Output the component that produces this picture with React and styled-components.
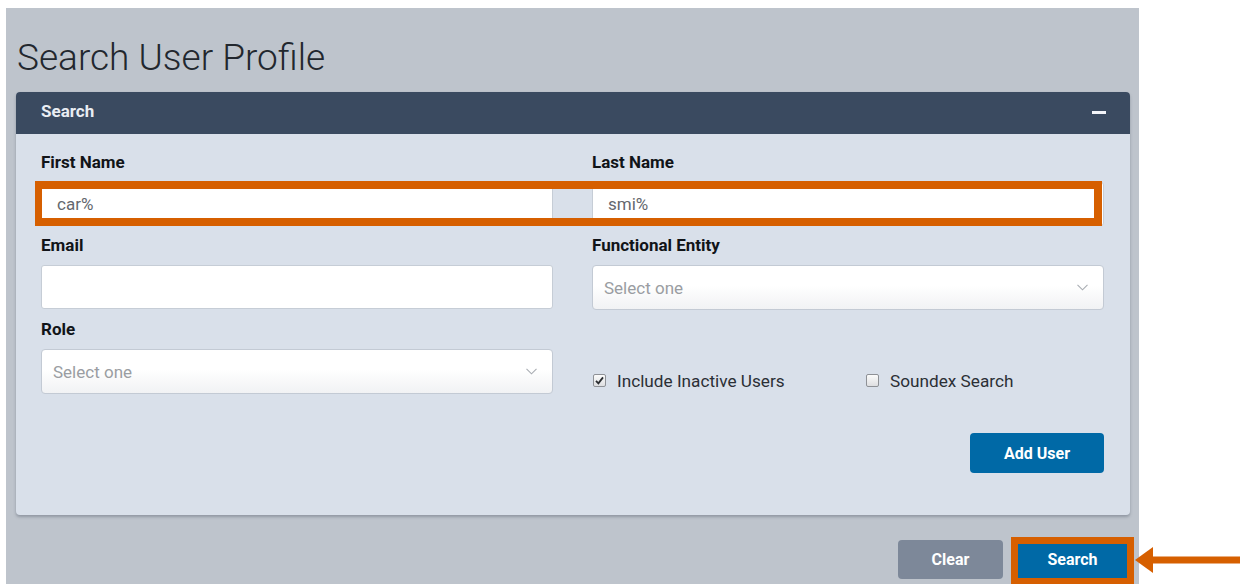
import React from "react";
import styled, { createGlobalStyle } from "styled-components";

const GlobalStyle = createGlobalStyle`
  html, body {
    margin: 0;
    padding: 0;
    background: #ffffff;
  }
  body {
    font-family: Roboto, "Liberation Sans", Arial, sans-serif;
    overflow: hidden;
  }
  * { box-sizing: border-box; }
`;

const ORANGE = "#d65f00";

const Page = styled.div`
  margin: 8px 0 0 6px;
  width: 1133px;
  min-height: calc(100vh - 8px);
  background: #bec4cc;
  padding: 0 9px 0 10px;
  display: flex;
  flex-direction: column;
`;

const Title = styled.h1`
  margin: 27px 0 11px 1px;
  font-size: 37px;
  line-height: 46px;
  font-weight: 300;
  color: #22272e;
`;

const Panel = styled.section`
  background: #d9e0ea;
  border-radius: 4px;
  box-shadow: 0 2px 3px rgba(60, 70, 85, 0.35);
`;

const PanelHeader = styled.header`
  height: 42px;
  background: #3a4a60;
  border-radius: 4px 4px 0 0;
  display: flex;
  align-items: center;
  justify-content: space-between;
  padding: 0 24px 4px 25px;
  color: #e9edf3;
  font-size: 17px;
  font-weight: 700;
`;

const CollapseBar = styled.span`
  width: 14px;
  height: 3px;
  margin-top: 3px;
  background: #f2f4f8;
`;

const PanelBody = styled.div`
  position: relative;
  padding: 18px 26px 42px 25px;
`;

const FieldGrid = styled.div`
  display: grid;
  grid-template-columns: 1fr 1fr;
  column-gap: 39px;
  row-gap: 9px;
`;

const Field = styled.div`
  display: flex;
  flex-direction: column;
`;

const Label = styled.label`
  font-size: 17px;
  line-height: 20px;
  font-weight: 700;
  color: #111418;
  margin-bottom: 10px;
`;

const TextInput = styled.div`
  height: 44px;
  background: #ffffff;
  border: 1px solid #c6cdd6;
  border-radius: 3px;
  display: flex;
  align-items: center;
  padding: 0 15px;
  font-size: 17px;
  color: #64686e;
`;

const Select = styled.div`
  height: 45px;
  background: linear-gradient(#ffffff 45%, #f1f2f4);
  border: 1px solid #c3cad4;
  border-radius: 4px;
  display: flex;
  align-items: center;
  justify-content: space-between;
  padding: 0 15px 0 11px;
  font-size: 17px;
  color: #9a9da2;
`;

const Chevron = () => (
  <svg width="11" height="7" viewBox="0 0 11 7" fill="none">
    <path d="M0.5 0.8 L5.5 5.8 L10.5 0.8" stroke="#a9adb3" strokeWidth="1.1" />
  </svg>
);

const Highlight = styled.div`
  position: absolute;
  left: 19px;
  top: 47px;
  width: 1067px;
  height: 45px;
  border: 8px solid ${ORANGE};
  border-left-width: 7px;
  pointer-events: none;
`;

const OptionRow = styled.div`
  display: grid;
  grid-template-columns: 273px auto;
  align-items: center;
  padding: 48px 0 0 1px;
`;

const Option = styled.label`
  display: flex;
  align-items: center;
  gap: 11px;
  font-size: 17.2px;
  line-height: 20px;
  color: #2b2f35;
`;

const Box = styled.span`
  width: 13px;
  height: 13px;
  border: 1px solid #8e9196;
  border-radius: 2px;
  background: linear-gradient(#fbfbfb, #dedfe1);
  display: flex;
  align-items: center;
  justify-content: center;
`;

const Checkbox = ({ checked }) => (
  <Box>
    {checked && (
      <svg width="9" height="9" viewBox="0 0 9 9">
        <path d="M1 4.8 L3.4 7.3 L8 1.4" stroke="#2a2d31" strokeWidth="1.8" fill="none" />
      </svg>
    )}
  </Box>
);

const ActionRow = styled.div`
  display: flex;
  justify-content: flex-end;
  margin-top: 39px;
`;

const Button = styled.button`
  height: ${(p) => p.$h || 39}px;
  width: ${(p) => p.$w}px;
  border: none;
  border-radius: 4px;
  background: ${(p) => p.$bg};
  color: #ffffff;
  font-family: Roboto, "Liberation Sans", Arial, sans-serif;
  font-size: 16px;
  font-weight: 700;
  cursor: pointer;
  ${(p) => p.$marked && `outline: 7px solid ${ORANGE}; border-radius: 0; padding-bottom: 4px;`}
`;

const Footer = styled.div`
  position: relative;
  display: flex;
  justify-content: flex-end;
  align-items: flex-start;
  gap: 15px;
  margin-top: 25px;
  padding-right: 3px;
`;

const SearchSlot = styled.div`
  padding-top: 4px;
`;

const Pointer = styled.svg`
  position: absolute;
  left: calc(100% + 5px);
  top: 7px;
`;

export default function App() {
  return (
    <>
      <GlobalStyle />
      <Page>
        <Title>Search User Profile</Title>
        <Panel>
          <PanelHeader>
            <span>Search</span>
            <CollapseBar />
          </PanelHeader>
          <PanelBody>
            <FieldGrid>
              <Field>
                <Label>First Name</Label>
                <TextInput>car%</TextInput>
              </Field>
              <Field>
                <Label>Last Name</Label>
                <TextInput>smi%</TextInput>
              </Field>
              <Field>
                <Label>Email</Label>
                <TextInput />
              </Field>
              <Field>
                <Label>Functional Entity</Label>
                <Select>
                  <span>Select one</span>
                  <Chevron />
                </Select>
              </Field>
              <Field>
                <Label>Role</Label>
                <Select>
                  <span>Select one</span>
                  <Chevron />
                </Select>
              </Field>
              <OptionRow>
                <Option>
                  <Checkbox checked />
                  Include Inactive Users
                </Option>
                <Option>
                  <Checkbox />
                  Soundex Search
                </Option>
              </OptionRow>
            </FieldGrid>
            <ActionRow>
              <Button $w={134} $h={40} $bg="#0069a6">Add User</Button>
            </ActionRow>
            <Highlight />
          </PanelBody>
        </Panel>
        <Footer>
          <Button $w={105} $bg="#7d8899">Clear</Button>
          <SearchSlot>
            <Button $w={109} $h={34} $bg="#0069a6" $marked>Search</Button>
          </SearchSlot>
          <Pointer width="105" height="26" viewBox="0 0 105 26">
            <polygon points="0,13 18,0 18,26" fill={ORANGE} />
            <rect x="17" y="9.5" width="88" height="7" fill={ORANGE} />
          </Pointer>
        </Footer>
      </Page>
    </>
  );
}
